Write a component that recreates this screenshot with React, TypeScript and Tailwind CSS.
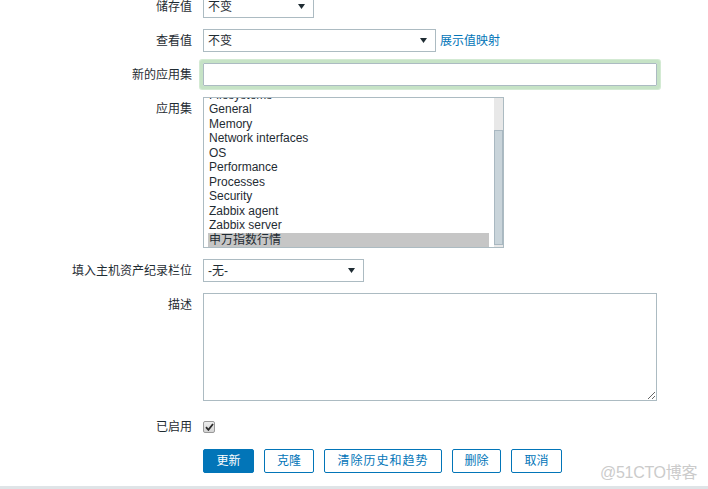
import React from 'react';

const font = { fontFamily: '"Liberation Sans", Arial, "Noto Sans CJK SC", sans-serif' };

const Arrow = () => (
  <svg width="7" height="5" viewBox="0 0 7 5" className="shrink-0">
    <path d="M0 0 H7 L3.5 5 Z" fill="#1f2c33" />
  </svg>
);

const Select = ({ value, width }: { value: string; width: string }) => (
  <div
    className={`${width} h-[23px] border border-[#acbbc2] bg-white flex items-center justify-between pl-[4px] pr-[8px] text-[12px] text-[#1f2c33]`}
  >
    <span>{value}</span>
    <Arrow />
  </div>
);

const Label = ({ children }: { children: React.ReactNode }) => (
  <div className="h-[23px] flex items-center justify-end text-[12px] text-[#1f2c33] whitespace-nowrap">
    {children}
  </div>
);

const apps = [
  'Filesystems',
  'General',
  'Memory',
  'Network interfaces',
  'OS',
  'Performance',
  'Processes',
  'Security',
  'Zabbix agent',
  'Zabbix server',
  '申万指数行情',
];

const App: React.FC = () => {
  return (
    <div className="relative w-[708px] h-[489px] bg-white overflow-hidden flex flex-col" style={font}>
      <div className="grid grid-cols-[192px_1fr] gap-x-[11px] -mt-[5px]">
        {/* 储存值 */}
        <Label>储存值</Label>
        <div className="flex">
          <Select value="不变" width="w-[111px]" />
        </div>

        {/* 查看值 */}
        <div className="mt-[11px]">
          <Label>查看值</Label>
        </div>
        <div className="mt-[11px] flex items-center gap-[4px]">
          <Select value="不变" width="w-[233px]" />
          <a className="text-[12px] text-[#0275b8] cursor-pointer">展示值映射</a>
        </div>

        {/* 新的应用集 */}
        <div className="mt-[11px]">
          <Label>新的应用集</Label>
        </div>
        <div className="mt-[11px] flex">
          <input
            className="w-[454px] h-[23px] border border-[#acbbc2] rounded-[1px] outline-none shadow-[0_0_0_3px_#c6e3c6,0_0_0_4px_#d3ead3] px-[4px] text-[12px]"
            defaultValue=""
          />
        </div>

        {/* 应用集 */}
        <div className="mt-[11px]">
          <Label>应用集</Label>
        </div>
        <div className="mt-[11px] flex">
          <div className="w-[301px] h-[151px] border border-[#acbbc2] bg-white flex">
            <div className="flex-1 flex flex-col justify-end overflow-hidden pl-[4px] pr-[5px] pb-[0px]">
              {apps.map((a, i) => (
                <div
                  key={a}
                  className={`h-[14.5px] shrink-0 leading-[14.5px] text-[12px] pl-[1px] text-[#1f2c33] ${
                    i === apps.length - 1 ? 'bg-[#c6c6c6]' : ''
                  }`}
                >
                  {a}
                </div>
              ))}
            </div>
            <div className="w-[9px] bg-[#e8e8e8] flex flex-col pt-[32px] pb-[2px]">
              <div className="flex-1 bg-[#c9d4da] border border-[#a9b8c1]" />
            </div>
          </div>
        </div>

        {/* 填入主机资产纪录栏位 */}
        <div className="mt-[11px]">
          <Label>填入主机资产纪录栏位</Label>
        </div>
        <div className="mt-[11px] flex">
          <Select value="-无-" width="w-[161px]" />
        </div>

        {/* 描述 */}
        <div className="mt-[11px]">
          <Label>描述</Label>
        </div>
        <div className="mt-[11px] flex">
          <textarea className="w-[454px] h-[108px] border border-[#acbbc2] outline-none resize-y text-[12px] p-[4px]" />
        </div>

        {/* 已启用 */}
        <div className="mt-[14px]">
          <Label>已启用</Label>
        </div>
        <div className="mt-[14px] h-[23px] flex items-center">
          <span className="mt-[1px] w-[12px] h-[12px] rounded-[2px] border border-[#9a9a9a] bg-gradient-to-b from-[#eeeeee] to-[#d4d4d4] flex items-center justify-center">
            <svg width="9" height="8" viewBox="0 0 9 8">
              <path d="M1 4.2 L3.4 6.8 L8 1" stroke="#2b2b2b" strokeWidth="1.8" fill="none" />
            </svg>
          </span>
        </div>

        {/* buttons */}
        <div />
        <div className="mt-[11px] flex gap-[10px] text-[12px]">
          <button className="w-[51px] h-[24px] rounded-[2px] bg-[#0275b8] border border-[#0275b8] text-white">
            更新
          </button>
          <button className="w-[50px] h-[24px] rounded-[2px] bg-white border border-[#0275b8] text-[#0275b8]">
            克隆
          </button>
          <button className="w-[118px] h-[24px] rounded-[2px] bg-white border border-[#0275b8] text-[#0275b8] tracking-[1px]">
            清除历史和趋势
          </button>
          <button className="w-[49px] h-[24px] rounded-[2px] bg-white border border-[#0275b8] text-[#0275b8]">
            删除
          </button>
          <button className="w-[51px] h-[24px] rounded-[2px] bg-white border border-[#0275b8] text-[#0275b8]">
            取消
          </button>
        </div>
      </div>

      <div className="mt-auto h-[3px] bg-[#dfe4e7]" />

      <div className="absolute left-[600px] top-[461px] text-[16px] text-[#cbcbcb] tracking-[-0.3px]">
        @51CTO博客
      </div>
    </div>
  );
};

export default App;
